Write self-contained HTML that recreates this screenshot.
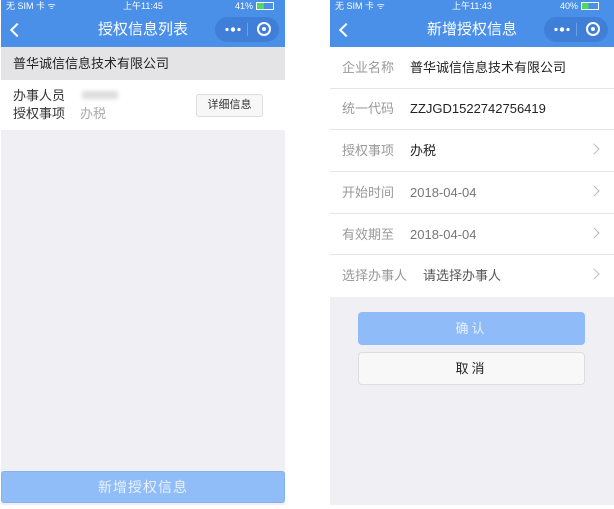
<!DOCTYPE html><html><head><meta charset="utf-8"><style>
*{margin:0;padding:0;box-sizing:border-box}
body{width:614px;height:509px;background:#fff;font-family:"Liberation Sans","Noto Sans CJK SC",sans-serif;position:relative;overflow:hidden}
.scr{position:absolute;top:0;background:#efeff4}
.sb{position:absolute;left:0;right:0;top:0;height:14px;background:#4a8fe8;color:#fff;font-size:9px;line-height:13px}
.nav{position:absolute;left:0;right:0;top:13px;height:34px;background:#4a8fe8;color:#fff}
.nav .t{position:absolute;left:0;right:0;text-align:center;top:0;line-height:34px;font-size:15px}
.back{position:absolute;left:11px;top:12px;width:10px;height:10px;border-left:2px solid #fff;border-bottom:2px solid #fff;transform:rotate(45deg)}
.cap{position:absolute;top:4px;width:64px;height:25px;border-radius:13px;background:#3f7fd8}
.cap .s{position:absolute;left:32px;top:6px;width:1px;height:13px;background:#6fa0e0}
.cap .o{position:absolute;left:42px;top:5px;width:14px;height:14px;border:2px solid #fff;border-radius:50%}
.cap .o:after{content:"";position:absolute;left:3px;top:3px;width:4px;height:4px;background:#fff;border-radius:50%}
.row{position:absolute;left:0;right:0;background:#fff;border-bottom:1px solid #e5e5e5;font-size:13px;display:flex;align-items:center}
.lb{position:absolute;left:12px;color:#999;line-height:16px}
.vl{position:absolute;left:80px;color:#222;line-height:16px}
.ar{position:absolute;right:16px;width:8px;height:8px;border-right:1px solid #bbb;border-top:1px solid #bbb;transform:rotate(45deg)}
</style></head><body>
<div class="scr" style="left:1px;width:284px;height:505px">
<div class="sb"><span style="position:absolute;left:5px;top:0">无 SIM 卡 ᯤ</span><span style="position:absolute;left:122px;top:0">上午11:45</span><span style="position:absolute;left:234px;top:0">41% <span style="display:inline-block;width:18px;height:8px;border:1px solid #fff;vertical-align:-1px;background:linear-gradient(90deg,#4cd964 45%,transparent 45%)"></span></span></div>
<div class="nav"><div class="back"></div><div class="t">授权信息列表</div><div class="cap" style="left:214px"><svg style="position:absolute;left:10px;top:10px" width="16" height="5"><circle cx="2" cy="2.5" r="1.6" fill="#fff"/><circle cx="8" cy="2.5" r="2.2" fill="#fff"/><circle cx="14" cy="2.5" r="1.6" fill="#fff"/></svg><span class="s"></span><span class="o"></span></div></div>
<div style="position:absolute;left:0;right:0;top:47px;height:33px;background:#e4e4e6;font-size:13px;color:#222;padding-left:12px;line-height:33px">普华诚信信息技术有限公司</div>
<div style="position:absolute;left:0;right:0;top:80px;height:50px;background:#fff;font-size:13px">
<span class="lb" style="color:#333;top:8px">办事人员</span><span style="position:absolute;left:81px;top:11px;width:36px;height:8px;background:#ddd;filter:blur(2px)"></span>
<span class="lb" style="color:#333;top:26px">授权事项</span><span style="position:absolute;left:79px;top:26px;color:#aaa;line-height:16px">办税</span>
<span style="position:absolute;left:195px;top:14px;width:67px;height:23px;border:1px solid #ddd;border-radius:3px;background:#f7f7f7;font-size:11px;text-align:center;line-height:21px;color:#333">详细信息</span></div>
<div style="position:absolute;left:0;right:0;top:471px;height:32px;background:#90bdf8;border:1px solid #84b2ef;border-radius:3px;color:#e8f1ff;font-size:14px;text-align:center;line-height:30px;letter-spacing:1px">新增授权信息</div>
</div>
<div class="scr" style="left:330px;width:284px;height:505px">
<div class="sb"><span style="position:absolute;left:5px;top:0">无 SIM 卡 ᯤ</span><span style="position:absolute;left:122px;top:0">上午11:43</span><span style="position:absolute;left:230px;top:0">40% <span style="display:inline-block;width:18px;height:8px;border:1px solid #fff;vertical-align:-1px;background:linear-gradient(90deg,#4cd964 40%,transparent 40%)"></span></span></div>
<div class="nav"><div class="back"></div><div class="t">新增授权信息</div><div class="cap" style="left:214px"><svg style="position:absolute;left:10px;top:10px" width="16" height="5"><circle cx="2" cy="2.5" r="1.6" fill="#fff"/><circle cx="8" cy="2.5" r="2.2" fill="#fff"/><circle cx="14" cy="2.5" r="1.6" fill="#fff"/></svg><span class="s"></span><span class="o"></span></div></div>
<div class="row" style="top:47px;height:42px"><span class="lb" style="top:13px">企业名称</span><span class="vl" style="top:13px">普华诚信信息技术有限公司</span></div>
<div class="row" style="top:89px;height:41px"><span class="lb" style="top:12px">统一代码</span><span class="vl" style="top:12px">ZZJGD1522742756419</span></div>
<div class="row" style="top:130px;height:42px"><span class="lb" style="top:13px">授权事项</span><span class="vl" style="top:13px">办税</span><span class="ar" style="top:15px"></span></div>
<div class="row" style="top:172px;height:42px"><span class="lb" style="top:13px">开始时间</span><span class="vl" style="top:13px;color:#777">2018-04-04</span><span class="ar" style="top:15px"></span></div>
<div class="row" style="top:214px;height:41px"><span class="lb" style="top:13px">有效期至</span><span class="vl" style="top:13px;color:#777">2018-04-04</span><span class="ar" style="top:15px"></span></div>
<div class="row" style="top:255px;height:42px;border:none"><span class="lb" style="top:13px">选择办事人</span><span class="vl" style="left:93px;top:13px;color:#555">请选择办事人</span><span class="ar" style="top:15px"></span></div>
<div style="position:absolute;left:28px;width:227px;top:312px;height:33px;background:#8fbcf8;border-radius:4px;color:#e8f1ff;font-size:13px;text-align:center;line-height:33px;letter-spacing:3px">确认</div>
<div style="position:absolute;left:28px;width:227px;top:352px;height:33px;background:#f8f8f8;border:1px solid #ddd;border-radius:4px;color:#222;font-size:13px;text-align:center;line-height:31px;letter-spacing:3px">取消</div>
</div>
</body></html>
